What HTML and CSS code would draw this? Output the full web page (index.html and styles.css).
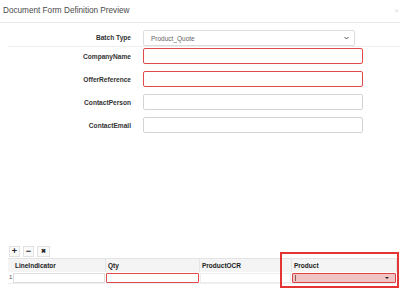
FILE: index.html
```html
<!DOCTYPE html>
<html>
<head>
<meta charset="utf-8">
<link rel="stylesheet" href="styles.css">
</head>
<body>
<div class="page">
  <div class="header">
    <span class="title">Document Form Definition Preview</span>
    <span class="close">×</span>
  </div>
  <div class="form">
    <div class="row batch">
      <label class="lbl">Batch Type</label>
      <div class="select"><span>Product_Quote</span><svg class="chev" width="5" height="4" viewBox="0 0 5 4"><path d="M0.5 1 L2.5 3 L4.5 1" fill="none" stroke="#555" stroke-width="1"/></svg></div>
    </div>
    <div class="row">
      <label class="lbl">CompanyName</label>
      <div class="input invalid"></div>
    </div>
    <div class="row">
      <label class="lbl">OfferReference</label>
      <div class="input invalid"></div>
    </div>
    <div class="row">
      <label class="lbl">ContactPerson</label>
      <div class="input"></div>
    </div>
    <div class="row">
      <label class="lbl">ContactEmail</label>
      <div class="input"></div>
    </div>
  </div>
  <div class="grid-area">
    <div class="toolbar">
      <span class="tbtn">+</span>
      <span class="tbtn">−</span>
      <span class="tbtn x">✖</span>
    </div>
    <div class="table">
      <div class="th num"></div>
      <div class="th">LineIndicator</div>
      <div class="th">Qty</div>
      <div class="th">ProductOCR</div>
      <div class="th">Product</div>
      <div class="td num">1</div>
      <div class="td"><div class="cell-input"></div></div>
      <div class="td"><div class="cell-input invalid"></div></div>
      <div class="td"><div class="cell-input plain"></div></div>
      <div class="td"><div class="cell-select"><span class="caret"></span><span class="tri"></span></div></div>
    </div>
    <div class="highlight"></div>
  </div>
</div>
</body>
</html>
```
FILE: styles.css
```css
* { box-sizing: border-box; }
html, body { margin: 0; padding: 0; background: #fff; }
body { font-family: "Liberation Sans", Arial, sans-serif; color: #333; }
.page { width: 400px; height: 302px; display: flex; flex-direction: column; }
.header {
  height: 23px;
  border-bottom: 1px solid #e8e8e8;
  display: flex;
  align-items: center;
  justify-content: space-between;
  padding: 0 1px 2px 3px;
}
.title { font-size: 8.2px; color: #4a4a4a; }
.close { font-size: 8px; color: #ddd; }
.form { margin-top: 7px; display: flex; flex-direction: column; gap: 7px; }
.row { display: flex; align-items: center; height: 16px; }
.row.batch { height: 17px; margin-left: 8px; border-bottom: 1px solid #eee; align-items: flex-start; margin-bottom: -6px; }
.row.batch .lbl { width: 123px; line-height: 16px; }
.lbl {
  width: 131px;
  text-align: right;
  font-size: 6.6px;
  font-weight: bold;
  color: #333;
  margin-right: 12px;
}
.select {
  width: 212px;
  height: 16px;
  border: 1px solid #ddd;
  border-radius: 2px;
  display: flex;
  align-items: center;
  justify-content: space-between;
  padding: 0 5px 0 7px;
  font-size: 6.5px;
  color: #666;
}
.input {
  width: 220px;
  height: 16px;
  border: 1px solid #d4d4d4;
  border-radius: 2px;
}
.input.invalid { border: 1px solid #e04a4a; }
.grid-area { margin-top: auto; margin-bottom: 18px; position: relative; padding: 0 3px 0 8px; }
.toolbar { display: flex; gap: 3px; margin-left: 1px; margin-bottom: 1px; }
.tbtn {
  width: 11px;
  height: 11px;
  border: 1px solid #e2e2e2;
  background: #fafafa;
  font-size: 9px;
  font-weight: bold;
  line-height: 9px;
  text-align: center;
  color: #222;
}
.tbtn.x { width: 13px; font-size: 6px; }
.table {
  display: grid;
  grid-template-columns: 5px 93px 94px 92px 105px;
  font-size: 6.5px;
}
.th {
  height: 14px;
  background: #f4f4f4;
  border-top: 1px solid #e4e4e4;
  border-right: 1px solid #e4e4e4;
  font-weight: bold;
  padding: 3px 0 0 2px;
  color: #222;
}
.th.num { background: #f4f4f4; border-right: none; }
.td { height: 12px; padding: 1px 1px 0 0; border-bottom: 1px solid #eee; }
.td.num { font-size: 6px; color: #555; padding: 2px 0 0 1px; }
.cell-input { height: 10px; border: 1px solid #ddd; }
.cell-input.invalid { border: 1px solid #e04a4a; border-radius: 1px; }
.cell-input.plain { border-color: #eee; }
.cell-select {
  height: 10px;
  background: #f1c3c3;
  border: 1px solid #d94444;
  border-radius: 1px;
  display: flex;
  align-items: center;
  justify-content: space-between;
  padding: 0 6px 0 2px;
}
.caret { width: 1px; height: 6px; background: #8a5a5a; }
.tri { width: 0; height: 0; border-left: 2px solid transparent; border-right: 2px solid transparent; border-top: 2px solid #222; }
.highlight {
  position: absolute;
  left: 280px;
  top: 6px;
  width: 119px;
  height: 36px;
  border: 2px solid #e43434;
}
```
